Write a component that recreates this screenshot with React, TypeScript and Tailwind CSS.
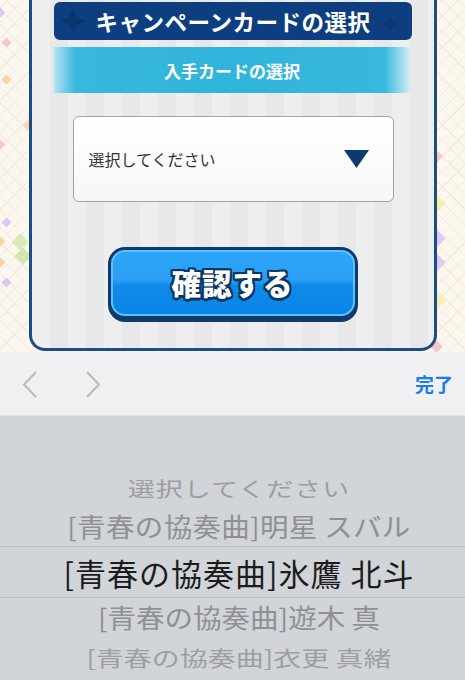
import React from "react";

const jp = { fontFamily: '"Noto Sans CJK JP", "Noto Sans", sans-serif' } as const;

function Diamond({ className }: { className: string }) {
  return <div className={"absolute rotate-45 " + className} />;
}

function Sparkle({ className }: { className: string }) {
  return (
    <svg className={"absolute " + className} viewBox="0 0 20 20">
      <path d="M10 0 L13 7 L20 10 L13 13 L10 20 L7 13 L0 10 L7 7 Z" fill="#0a356c" />
    </svg>
  );
}

export default function App() {
  return (
    <div
      className="w-[465px] h-[680px] overflow-hidden flex flex-col font-['Noto_Sans_CJK_JP',sans-serif]"
      style={jp}
    >
      {/* game area */}
      <div className="relative h-[352px] shrink-0 bg-[#fcf7ee] bg-[repeating-linear-gradient(45deg,#f4ebdf_0_1px,transparent_1px_11px),repeating-linear-gradient(-45deg,#f4ebdf_0_1px,transparent_1px_11px)]">
        {/* decorative diamonds */}
        <Diamond className="left-[-3px] top-[9px] w-[7px] h-[7px] bg-[#d9c8f2]" />
        <Diamond className="left-[3px] top-[39px] w-[7px] h-[7px] bg-[#f6c7cf]" />
        <Diamond className="left-[3px] top-[76px] w-[7px] h-[7px] bg-[#f9d3a4]" />
        <Diamond className="left-[24px] top-[122px] w-[7px] h-[7px] bg-[#f9d9a8]" />
        <Diamond className="left-[-3px] top-[141px] w-[7px] h-[7px] bg-[#f6c7cf]" />
        <Diamond className="left-[3px] top-[219px] w-[7px] h-[7px] bg-[#d9c8f2]" />
        <Diamond className="left-[-3px] top-[238px] w-[7px] h-[7px] bg-[#f9d3a4]" />
        <Diamond className="left-[14px] top-[236px] w-[12px] h-[12px] bg-[#d9e9b9]" />
        <Diamond className="left-[17px] top-[250px] w-[12px] h-[12px] bg-[#d4e6ae]" />
        <Diamond className="left-[-3px] top-[259px] w-[7px] h-[7px] bg-[#f9d3a4]" />
        <Diamond className="left-[3px] top-[279px] w-[7px] h-[7px] bg-[#d9c8f2]" />
        <Diamond className="left-[432px] top-[152px] w-[9px] h-[9px] bg-[#f6c7cf]" />
        <Diamond className="left-[430px] top-[197px] w-[13px] h-[13px] bg-[#f8efaa]" />
        <Diamond className="left-[430px] top-[232px] w-[13px] h-[13px] bg-[#dccbf4]" />
        <Diamond className="left-[430px] top-[256px] w-[13px] h-[13px] bg-[#dccbf4]" />
        <Diamond className="left-[430px] top-[294px] w-[13px] h-[13px] bg-[#f8efaa]" />
        <Diamond className="left-[432px] top-[342px] w-[9px] h-[9px] bg-[#f6c7cf]" />

        {/* panel */}
        <div className="relative z-10 ml-[29px] w-[408px] h-[351px] border-x-[3px] border-b-[3px] border-[#1a4c86] rounded-b-[16px] bg-[#eeeeee] bg-[repeating-linear-gradient(90deg,#eeeeee_0_18px,#e8e8e8_18px_36px)] flex flex-col items-center">
          {/* title bar */}
          <div className="relative mt-[2px] w-[358px] h-[38px] rounded-[6px] bg-[#0d3f80] overflow-hidden flex items-center justify-center">
            <Sparkle className="left-[6px] top-[6px] w-[26px] h-[26px] opacity-80" />
            <Sparkle className="left-[300px] top-[4px] w-[22px] h-[22px] opacity-60" />
            <Sparkle className="left-[328px] top-[14px] w-[16px] h-[16px] opacity-60" />
            <span className="relative text-white font-bold text-[22.5px] leading-none tracking-[0.5px]">
              キャンペーンカードの選択
            </span>
          </div>

          {/* sub header */}
          <div className="mt-[7px] w-[356px] h-[46px] -ml-[2px] bg-[linear-gradient(90deg,#b5e2f0_0%,#3ab8de_6%,#2fb4dc_50%,#3ab8de_93%,#d2eef7_100%)] flex items-center justify-center">
            <span className="text-white font-bold text-[17px] leading-none">入手カードの選択</span>
          </div>

          {/* dropdown */}
          <div className="mt-[23px] w-[321px] h-[86px] rounded-[6px] border border-[#a3a3a3] bg-[linear-gradient(180deg,#ffffff,#f7f7f7)] flex items-center justify-between pl-[15px] pr-[24px]">
            <span className="text-[#333333] text-[16px] leading-none">選択してください</span>
            <svg width="25" height="18" viewBox="0 0 25 18">
              <path d="M0 0 H25 L12.5 18 Z" fill="#0b3a70" />
            </svg>
          </div>

          {/* confirm button */}
          <div className="mt-[45px] w-[250px] h-[75px] -ml-[1px] rounded-[17px] bg-[#0e3a6c] p-[3px] pb-[6px]">
            <div className="relative w-full h-full rounded-[14px] border-[2px] border-[#5ec0ff] bg-[linear-gradient(180deg,#2ea6f8_0%,#2a9ff5_45%,#0f8aea_55%,#0a86e8_100%)] flex items-center justify-center overflow-hidden">
              <span className="relative text-white font-black text-[29.5px] leading-none tracking-[1px] [text-shadow:2px_0_0_#0b3764,-2px_0_0_#0b3764,0_2px_0_#0b3764,0_-2px_0_#0b3764,2px_2px_0_#0b3764,-2px_-2px_0_#0b3764,2px_-2px_0_#0b3764,-2px_2px_0_#0b3764,0_3px_0_#0b3764]">
                確認する
              </span>
            </div>
          </div>
        </div>
      </div>

      {/* keyboard toolbar */}
      <div className="h-[63px] shrink-0 bg-[#f0f0f2] flex items-center pl-[22px] pr-[12px]">
        <svg width="16" height="27" viewBox="0 0 16 27" className="mt-[1px]">
          <path d="M14 1 L2 13.5 L14 26" fill="none" stroke="#b9b9bd" strokeWidth="2" />
        </svg>
        <svg width="16" height="27" viewBox="0 0 16 27" className="ml-[47px] mt-[1px]">
          <path d="M2 1 L14 13.5 L2 26" fill="none" stroke="#b9b9bd" strokeWidth="2" />
        </svg>
        <span className="ml-auto text-[#1a7cf2] font-bold text-[19px] leading-none">完了</span>
      </div>

      {/* picker */}
      <div className="flex-1 bg-[#d1d4d9] border-t border-[#e2e4e7] flex flex-col items-center pt-[53px] pl-[13px]">
        <div className="h-[38px] flex items-center">
          <span className="text-[#9c9ea2] text-[27px] leading-none tracking-[1px] scale-y-75">選択してください</span>
        </div>
        <div className="h-[40px] -ml-[13px] w-[465px] pl-[13px] flex items-center justify-center border-b border-[#b8bbc0]">
          <span className="text-[#8e9093] text-[28.5px] leading-none tracking-[0.3px] scale-y-90">[青春の協奏曲]明星 スバル</span>
        </div>
        <div className="h-[51px] -ml-[13px] w-[465px] pl-[13px] flex items-center justify-center border-b border-[#b8bbc0]">
          <span className="text-[#1c1c1c] leading-none text-[31px] tracking-[1px]">[青春の協奏曲]氷鷹 北斗</span>
        </div>
        <div className="h-[39px] flex items-center">
          <span className="text-[#8e9093] text-[28.5px] leading-none scale-y-90">[青春の協奏曲]遊木 真</span>
        </div>
        <div className="h-[40px] flex items-center">
          <span className="text-[#9c9ea2] text-[28px] leading-none scale-y-75">[青春の協奏曲]衣更 真緒</span>
        </div>
      </div>
    </div>
  );
}
